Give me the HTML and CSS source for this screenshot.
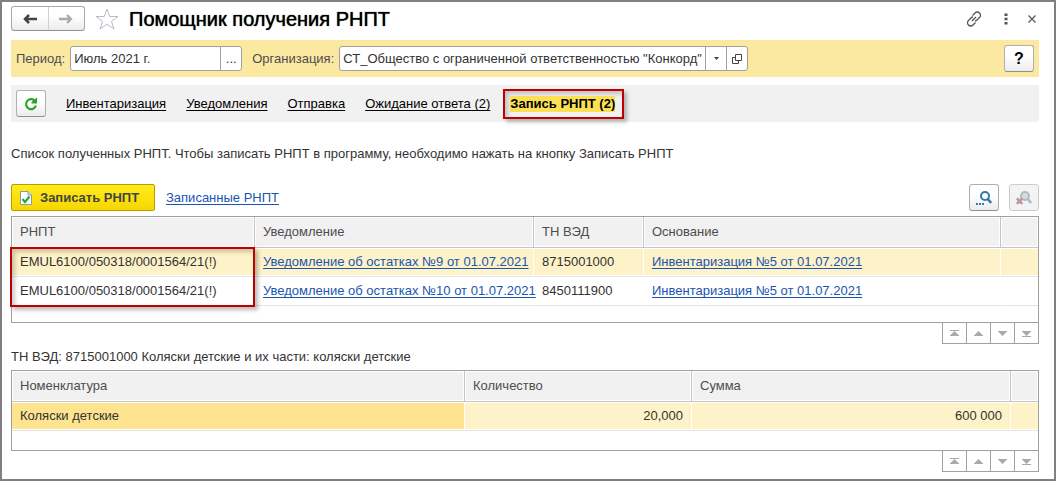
FILE: index.html
```html
<!DOCTYPE html>
<html lang="ru">
<head>
<meta charset="utf-8">
<title>Помощник получения РНПТ</title>
<link rel="stylesheet" href="styles.css">
</head>
<body>
<svg class="defs" aria-hidden="true">
  <symbol id="go-first" viewBox="0 0 9 7"><path d="M0 .5h9" stroke="#aaa"/><path d="M4.500 1 9 5.500V6H0v-.5z" fill="#aaa"/></symbol>
  <symbol id="go-up" viewBox="0 0 9 7"><path d="M4.500 1 9 5.500V6H0v-.5z" fill="#aaa"/></symbol>
  <symbol id="go-down" viewBox="0 0 9 7"><path d="M4.500 6 9 1.500V1H0v.5z" fill="#aaa"/></symbol>
  <symbol id="go-last" viewBox="0 0 9 7"><path d="M0 6.500h9" stroke="#aaa"/><path d="M4.500 6 9 1.500V1H0v.5z" fill="#aaa"/></symbol>
</svg>
<main class="window">
  <header class="titlebar">
    <div class="history">
      <button type="button" aria-label="Назад"><svg width="16" height="12" viewBox="0 0 16 12"><path d="M15 6H3M7 2 3 6l4 4" fill="none" stroke="#444" stroke-width="2.500"/></svg></button>
      <button type="button" aria-label="Вперед"><svg width="16" height="12" viewBox="0 0 16 12"><path d="M1 6h12M9 2l4 4-4 4" fill="none" stroke="#aaa" stroke-width="2.300"/></svg></button>
    </div>
    <button type="button" class="plain" aria-label="В избранное"><svg width="24" height="22" viewBox="0 0 24 22"><path d="m12 1 2.700 7.500H23l-6.500 4.800 2.500 7.700-7-4.700L5 21l2.500-7.700L1 8.500h8.300z" fill="#fff" stroke="#b4bcc4"/></svg></button>
    <h1>Помощник получения РНПТ</h1>
    <div class="tools">
      <button type="button" class="plain" aria-label="Ссылка"><svg width="16" height="16" viewBox="0 0 16 16"><g fill="none" stroke="#555" stroke-width="1.300"><path d="M6.500 4.500 9 2a3 3 0 0 1 4.500 0 3 3 0 0 1 0 4.500L11 9a3 3 0 0 1-2 1M6 10l4-4"/><path d="M9.500 11.500 7 14a3 3 0 0 1-4.500 0 3 3 0 0 1 0-4.500L5 7a3 3 0 0 1 2-1"/></g></svg></button>
      <button type="button" class="plain" aria-label="Меню"><svg width="4" height="12" viewBox="0 0 4 12"><path d="M.5.500h3v2.500h-3zM.5 4.700h3v2.500h-3zM.5 9h3v2.500h-3z" fill="#555"/></svg></button>
      <button type="button" class="plain" aria-label="Закрыть"><svg width="8" height="8" viewBox="0 0 8 8"><path d="m.5.500 7 7m0-7-7 7" stroke="#555" stroke-width="1.200"/></svg></button>
    </div>
  </header>

  <form class="filters">
    <label for="period">Период:</label>
    <div class="field period">
      <input id="period" type="text" value="Июль 2021 г.">
      <button type="button" aria-label="Выбрать период">...</button>
    </div>
    <label for="org">Организация:</label>
    <div class="field org">
      <input id="org" type="text" value="СТ_Общество с ограниченной ответственностью &quot;Конкорд&quot;">
      <button type="button" aria-label="Показать список"><svg width="5" height="3" viewBox="0 0 5 3"><path d="M0 0h5L2.500 3z" fill="#444"/></svg></button>
      <button type="button" aria-label="Открыть"><svg width="10" height="10" viewBox="0 0 10 10"><path d="M3.500.500h6v6h-6zM3.500 3.500h-3v6h6v-3" fill="none" stroke="#444"/></svg></button>
    </div>
    <button type="button" class="btn help">?</button>
  </form>

  <nav class="steps">
    <button type="button" class="btn" aria-label="Обновить"><svg width="14" height="14" viewBox="0 0 14 14"><path d="M10.300 3.300A5 5 0 1 0 11.900 8.500" fill="none" stroke="#2da32d" stroke-width="2.200"/><path d="M13 .500V6.500H7.500V5z" fill="#2da32d"/></svg></button>
    <a href="#">Инвентаризация</a>
    <a href="#">Уведомления</a>
    <a href="#">Отправка</a>
    <a href="#">Ожидание ответа (2)</a>
    <a href="#" class="current" aria-current="step"><span>Запись РНПТ (2)</span></a>
  </nav>

  <p class="hint">Список полученных РНПТ. Чтобы записать РНПТ в программу, необходимо нажать на кнопку Записать РНПТ</p>

  <div class="actions">
    <button type="button" class="btn primary"><svg width="12" height="14" viewBox="0 0 12 14"><path d="M.5.500h7.500l3.500 3.500v9.500H.5z" fill="#fff" stroke="#8a9ba5"/><path d="M8 .500V4h3.500" fill="#dde" stroke="#8a9ba5"/><path d="m2.500 8 2.500 3 4.500-5.500" fill="none" stroke="#25a83a" stroke-width="2.200"/></svg>Записать РНПТ</button>
    <a href="#">Записанные РНПТ</a>
    <button type="button" class="btn find" aria-label="Найти"><svg width="16" height="14" viewBox="0 0 16 14"><circle cx="9" cy="5" r="4" fill="none" stroke="#3178ad" stroke-width="2"/><path d="m11.700 8 3.500 4" stroke="#3178ad" stroke-width="2.600"/><path d="M0 12h2v2H0zM3 12h2v2H3zM6 12h2v2H6z" fill="#3178ad"/></svg></button>
    <button type="button" class="btn" aria-label="Отменить поиск" disabled><svg width="16" height="14" viewBox="0 0 16 14"><circle cx="9" cy="5" r="4" fill="#d5dde2" stroke="#b0bac1" stroke-width="2"/><path d="m11.700 8 3.500 4" stroke="#b0bac1" stroke-width="2.600"/><path d="m.8 7.300 5.500 5.500m0-5.500-5.500 5.500" stroke="#b89a9a" stroke-width="2.600"/></svg></button>
  </div>

  <section class="grid">
    <div class="frame">
      <table>
        <colgroup><col class="c-code"><col class="c-notice"><col class="c-tnved"><col><col class="c-tail"></colgroup>
        <thead><tr><th>РНПТ</th><th>Уведомление</th><th>ТН ВЭД</th><th>Основание</th><th></th></tr></thead>
        <tbody>
          <tr class="selected"><td>EMUL6100/050318/0001564/21(!)</td><td><a href="#">Уведомление об остатках №9 от 01.07.2021</a></td><td>8715001000</td><td><a href="#">Инвентаризация №5 от 01.07.2021</a></td><td></td></tr>
          <tr><td>EMUL6100/050318/0001564/21(!)</td><td><a href="#">Уведомление об остатках №10 от 01.07.2021</a></td><td>8450111900</td><td><a href="#">Инвентаризация №5 от 01.07.2021</a></td><td></td></tr>
        </tbody>
      </table>
      <div class="marker"></div>
    </div>
    <div class="pager">
      <button type="button" aria-label="В начало"><svg><use href="#go-first"/></svg></button>
      <button type="button" aria-label="Вверх"><svg><use href="#go-up"/></svg></button>
      <button type="button" aria-label="Вниз"><svg><use href="#go-down"/></svg></button>
      <button type="button" aria-label="В конец"><svg><use href="#go-last"/></svg></button>
    </div>
  </section>

  <p class="caption">ТН ВЭД: 8715001000 Коляски детские и их части: коляски детские</p>

  <section class="grid goods">
    <div class="frame">
      <table>
        <colgroup><col><col class="c-qty"><col class="c-sum"><col class="c-end"></colgroup>
        <thead><tr><th>Номенклатура</th><th>Количество</th><th>Сумма</th><th></th></tr></thead>
        <tbody><tr class="selected"><td class="active">Коляски детские</td><td class="num">20,000</td><td class="num">600 000</td><td></td></tr></tbody>
      </table>
    </div>
    <div class="pager">
      <button type="button" aria-label="В начало"><svg><use href="#go-first"/></svg></button>
      <button type="button" aria-label="Вверх"><svg><use href="#go-up"/></svg></button>
      <button type="button" aria-label="Вниз"><svg><use href="#go-down"/></svg></button>
      <button type="button" aria-label="В конец"><svg><use href="#go-last"/></svg></button>
    </div>
  </section>
</main>
</body>
</html>
```
FILE: styles.css
```css
* { box-sizing: border-box; }
body {
  margin: 0;
  background: #fff;
  color: #333;
  font: 13px/16px "Liberation Sans", Arial, sans-serif;
}
button, input { font: inherit; color: inherit; padding: 0; margin: 0; }
button { display: flex; align-items: center; justify-content: center; }
svg { display: block; flex: none; }
.defs { position: absolute; width: 0; height: 0; }
a { color: #1a56b0; text-underline-offset: 2px; text-decoration-skip-ink: none; }

.window { border: 2px solid #808080; padding: 4px 15px 7px 9px; }

.titlebar { display: flex; align-items: center; height: 25px; }
.history {
  display: flex;
  width: 74px;
  height: 25px;
  border: 1px solid #a8a8a8;
  border-bottom-color: #909090;
  border-radius: 3px;
  background: linear-gradient(#fff 40%, #ebebeb);
}
.history button { flex: 1; border: 0; background: none; }
.history button + button { border-left: 1px solid #d0d0d0; }
.plain { border: 0; background: none; }
.titlebar > .plain { margin-left: 10px; }
h1 {
  margin: 0 0 0 10px;
  color: #000;
  font-size: 20px;
  font-weight: normal;
  line-height: 24px;
  text-shadow: 0 0 1px #000;
}
.tools { display: flex; align-items: center; gap: 20px; margin: 0 3px 0 auto; }
.tools > :first-child { margin-right: 2px; }

.filters {
  display: flex;
  align-items: center;
  height: 37px;
  margin-top: 9px;
  padding: 0 5px;
  background: #fce9a1;
  color: #4d4d4d;
}
.field {
  display: flex;
  height: 25px;
  margin: 0 10px 0 5px;
  border: 1px solid #a0a0a0;
  border-radius: 3px;
  background: #fff;
  color: #333;
  overflow: hidden;
}
.field input { flex: 1; min-width: 0; border: 0; padding: 0 3px; background: none; outline: 0; }
.field button { width: 21px; border: 0; border-left: 1px solid #a0a0a0; background: none; }
.period { width: 172px; }
.org { width: 409px; }

.btn {
  width: 30px;
  height: 27px;
  border: 1px solid #b0b0b0;
  border-bottom-color: #909090;
  border-radius: 3px;
  background: linear-gradient(#fff 40%, #ececec);
}
.btn:disabled { border-color: #ccc; background: #f3f3f3; }
.help { margin-left: auto; color: #000; font-size: 16px; font-weight: bold; }

.steps {
  display: flex;
  align-items: center;
  gap: 20px;
  height: 37px;
  margin-top: 8px;
  padding: 0 5px;
  background: #f1f1f1;
}
.steps a { color: #000; }
.steps .current {
  padding: 5px 7px 5px 5px;
  margin-left: -7px;
  border: 2px solid #c00000;
  box-shadow: 3px 3px 4px #0004, inset 3px 3px 4px #0003;
  font-weight: bold;
  text-decoration: none;
}
.current span { display: block; background: #fce053; }

.hint { margin: 24px 0 22px; }

.actions { display: flex; align-items: center; height: 27px; margin-bottom: 5px; }
.primary {
  width: 144px;
  justify-content: flex-start;
  gap: 8px;
  margin-right: 11px;
  padding-left: 8px;
  border-color: #b59c00;
  border-radius: 2px;
  background: linear-gradient(#ffec1c, #f7d600);
  color: #444;
  font-weight: bold;
}
.find { margin: 0 10px 0 auto; }

.frame { position: relative; border: 1px solid #a0a0a0; padding-bottom: 16px; }
.goods .frame { padding-bottom: 19px; }
table { width: 100%; border-collapse: separate; border-spacing: 0; table-layout: fixed; }
th, td { padding: 0 8px; text-align: left; font-weight: normal; white-space: nowrap; }
th {
  height: 31px;
  border-right: 1px solid #c4c4c4;
  border-bottom: 1px solid #c4c4c4;
  background: #f1f1f1;
  box-shadow: inset 0 0 0 1px #fff;
  color: #4d4d4d;
}
td { height: 29px; border-bottom: 1px solid #e4e4e4; border-right: 1px solid #fff; }
th:last-child, td:last-child { border-right: 0; }
.selected td { background: #fef2c8; box-shadow: inset 0 1px #fff, inset 0 -1px #fff; }
.selected .active { background: #fee48e; }
.num { text-align: right; }
.c-code { width: 243px; }
.c-notice { width: 279px; }
.c-tnved { width: 110px; }
.c-tail { width: 37px; }
.c-qty { width: 227px; }
.c-sum { width: 319px; }
.c-end { width: 27px; }
.marker {
  position: absolute;
  top: 30px;
  left: -2px;
  width: 245px;
  height: 60px;
  border: 2px solid #c00000;
  box-shadow: 3px 3px 4px #0004, inset 3px 3px 4px #0003;
  pointer-events: none;
}

.pager { display: flex; justify-content: flex-end; }
.pager button {
  width: 24px;
  height: 21px;
  border: solid #a0a0a0;
  border-width: 0 1px 1px 0;
  background: #fff;
}
.pager button:first-child { width: 25px; border-left-width: 1px; }
.pager svg { width: 9px; height: 7px; }

.caption { margin: 5px 0; }
```
